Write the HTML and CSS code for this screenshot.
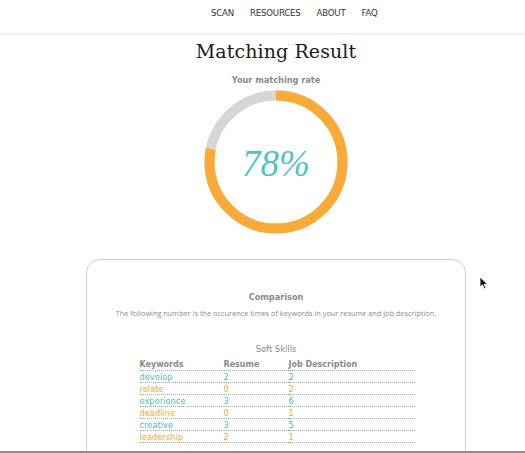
FILE: index.html
```html
<!DOCTYPE html>
<html>
<head>
<meta charset="utf-8">
<link rel="stylesheet" href="styles.css">
</head>
<body>
<header class="topbar">
  <nav class="nav">
    <a class="nav-link">SCAN</a>
    <a class="nav-link">RESOURCES</a>
    <a class="nav-link">ABOUT</a>
    <a class="nav-link">FAQ</a>
  </nav>
</header>
<main class="main">
  <h1 class="title">Matching Result</h1>
  <div class="rate-label">Your matching rate</div>
  <div class="ring">
    <svg class="ring-svg" width="144" height="144" viewBox="0 0 144 144">
      <circle cx="72" cy="72" r="66.5" fill="none" stroke="#d6d6d6" stroke-width="10"/>
      <circle cx="72" cy="72" r="66.5" fill="none" stroke="#fbaa36" stroke-width="10"
        stroke-dasharray="325.9 417.8" transform="rotate(-90 72 72)"/>
    </svg>
    <div class="ring-value">78%</div>
  </div>
  <section class="card">
    <h2 class="card-title">Comparison</h2>
    <p class="card-desc">The following number is the occurence times of keywords in your resume and job description.</p>
    <h3 class="table-title">Soft Skills</h3>
    <table class="skills">
      <thead>
        <tr><th>Keywords</th><th>Resume</th><th>Job Description</th></tr>
      </thead>
      <tbody>
        <tr class="teal"><td>develop</td><td>2</td><td>2</td></tr>
        <tr class="orange"><td>relate</td><td>0</td><td>2</td></tr>
        <tr class="teal"><td>experience</td><td>3</td><td>6</td></tr>
        <tr class="orange"><td>deadline</td><td>0</td><td>1</td></tr>
        <tr class="teal"><td>creative</td><td>3</td><td>5</td></tr>
        <tr class="orange"><td>leadership</td><td>2</td><td>1</td></tr>
      </tbody>
    </table>
  </section>
</main>
<svg class="cursor" width="10" height="14" viewBox="0 0 10 14">
  <path d="M1 1 L1 11 L3.5 8.8 L5.4 13 L7 12.3 L5.2 8.3 L8.5 8.2 Z" fill="#111" stroke="#fff" stroke-width="0.8"/>
</svg>
<div class="bottom-edge"></div>
</body>
</html>
```

FILE: styles.css
```css
* { box-sizing: border-box; }
html, body { margin: 0; padding: 0; background: #fff; overflow: hidden; }
body {
  width: 525px;
  height: 453px;
  font-family: "Open Sans", "DejaVu Sans", sans-serif;
  color: #333;
}
.topbar {
  height: 35px;
  border-bottom: 2px solid #f0f0f0;
  display: flex;
  align-items: flex-start;
}
.nav {
  display: flex;
  gap: 16px;
  margin-left: 211px;
  padding-top: 8px;
}
.nav-link {
  font-family: "DejaVu Sans", sans-serif;
  font-size: 8.6px;
  letter-spacing: -0.2px;
  color: #333;
}
.main {
  display: flex;
  flex-direction: column;
  align-items: center;
  padding-left: 27px;
}
.title {
  margin: 3px 0 0 0;
  font-family: "DejaVu Serif", serif;
  font-weight: normal;
  font-size: 19px;
  line-height: 26px;
  color: #1a1a1a;
  letter-spacing: 0.1px;
}
.rate-label {
  margin-top: 11px;
  font-family: "DejaVu Sans", sans-serif;
  font-size: 8.2px;
  font-weight: bold;
  color: #8a8a8a;
  line-height: 11px;
}
.ring {
  position: relative;
  width: 144px;
  height: 144px;
  margin-top: 4px;
  display: flex;
  align-items: center;
  justify-content: center;
}
.ring-svg { position: absolute; left: 0; top: 0; }
.ring-value {
  font-family: "Liberation Serif", "DejaVu Serif", serif;
  font-style: italic;
  font-size: 37px;
  color: #4ec5c1;
  letter-spacing: 0px;
  margin-top: 2px;
}
.card {
  margin-top: 25px;
  width: 380px;
  height: 240px;
  border: 1.5px solid #cfcfcf;
  border-radius: 14px;
  display: flex;
  flex-direction: column;
  align-items: center;
  padding-top: 32px;
}
.card-title {
  margin: 0;
  font-family: "DejaVu Sans", sans-serif;
  font-size: 8.2px;
  font-weight: bold;
  color: #8a8a8a;
  line-height: 11px;
}
.card-desc {
  margin: 5px 0 0 0;
  font-size: 7.35px;
  color: #8d8d8d;
  line-height: 11px;
}
.table-title {
  margin: 25px 0 0 0;
  font-family: "DejaVu Sans", sans-serif;
  font-size: 8.4px;
  font-weight: normal;
  color: #8a8a8a;
  line-height: 11px;
}
.skills {
  margin-top: 3px;
  width: 275px;
  border-collapse: collapse;
  font-family: "DejaVu Sans", sans-serif;
  font-size: 8.3px;
  margin-left: 2px;
}
.skills th, .skills td {
  text-align: left;
  padding: 0;
  height: 12px;
  line-height: 10px;
  border-bottom: 1px dotted #a8a8a8;
  vertical-align: bottom;
}
.skills th { color: #8a8a8a; font-weight: bold; font-size: 8px; }
.skills th:nth-child(1), .skills td:nth-child(1) { width: 84px; }
.skills th:nth-child(2), .skills td:nth-child(2) { width: 65px; }
.teal td { color: #45c2be; }
.orange td { color: #f7a632; }
.cursor { position: fixed; left: 479px; top: 276px; }
.bottom-edge {
  position: fixed;
  left: 0;
  bottom: 0;
  width: 525px;
  height: 2px;
  background: #8c8c8c;
}
```
